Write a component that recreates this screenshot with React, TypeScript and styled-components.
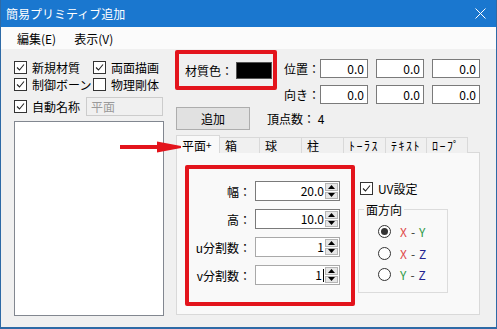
import React from 'react';
import styled, { createGlobalStyle } from 'styled-components';

const GlobalStyle = createGlobalStyle`
  html, body {
    margin: 0;
    padding: 0;
    background: #f0f0f0;
    overflow: hidden;
  }
  body {
    font-family: 'Noto Sans CJK JP', 'Noto Sans', sans-serif;
    font-size: 12px;
    color: #000000;
  }
`;

const Window = styled.div`
  position: relative;
  width: 497px;
  height: 329px;
  box-sizing: border-box;
  border: 1px solid #2e6aa6;
  border-top: none;
  border-bottom-width: 2px;
  background: #f0f0f0;
  display: flex;
  flex-direction: column;
  overflow: hidden;
`;

const TitleBar = styled.div`
  height: 27px;
  flex: none;
  background: #1a77cf;
  color: #ffffff;
  display: flex;
  align-items: center;
  justify-content: space-between;
  padding: 0 10px 0 5px;
  line-height: 27px;
`;

const MenuBar = styled.div`
  height: 22px;
  flex: none;
  background: #fbfbfb;
  display: flex;
  align-items: center;
  gap: 18px;
  padding-left: 16px;
`;

const Body = styled.div`
  display: flex;
  gap: 11px;
  padding-left: 13px;
`;

const LeftCol = styled.div`
  width: 150px;
  padding-top: 12px;
  display: flex;
  flex-direction: column;
`;

const CheckGrid = styled.div`
  display: grid;
  grid-template-columns: 79px auto;
  row-gap: 4px;
`;

const CheckItem = styled.label<{ $w?: number }>`
  display: flex;
  align-items: center;
  gap: 5px;
  height: 13px;
  line-height: 13px;
  white-space: nowrap;
  width: ${(p) => (p.$w ? `${p.$w}px` : 'auto')};
  flex: none;
`;

const Box = styled.span`
  width: 13px;
  height: 13px;
  box-sizing: border-box;
  border: 1px solid #333333;
  background: #ffffff;
  display: inline-flex;
  flex: none;
`;

const AutoRow = styled.div`
  display: flex;
  align-items: center;
  margin-top: 6px;
  height: 18px;
`;

const NameInput = styled.div`
  width: 77px;
  height: 19px;
  box-sizing: border-box;
  border: 1px solid #cccccc;
  background: #f0f0f0;
  color: #9a9a9a;
  padding-left: 4px;
  line-height: 17px;
`;

const ListBox = styled.div`
  margin-top: 6px;
  height: 195px;
  box-sizing: border-box;
  border: 1px solid #828790;
  background: #ffffff;
`;

const RightCol = styled.div`
  display: flex;
  flex-direction: column;
`;

const TopRow = styled.div`
  display: flex;
  align-items: flex-start;
`;

const ColorBox = styled.div`
  margin-top: 1px;
  width: 102px;
  height: 40px;
  box-sizing: border-box;
  border: 4px solid #e3141c;
  border-radius: 2px;
  display: flex;
  align-items: center;
  padding: 0 1px 0 6px;
`;

const Swatch = styled.span`
  margin-left: auto;
  width: 36px;
  height: 17px;
  box-sizing: border-box;
  border: 1px solid #555555;
  background: #000000;
`;

const PosGrid = styled.div`
  margin: 10px 0 0 4px;
  display: grid;
  grid-template-columns: 39px repeat(3, 56px);
  grid-auto-rows: 19px;
  row-gap: 7px;
  align-items: center;
`;

const FieldLabel = styled.span`
  text-align: right;
  white-space: nowrap;
`;

const NumBox = styled.div`
  width: 48px;
  height: 19px;
  box-sizing: border-box;
  border: 1px solid #7a7a7a;
  background: #ffffff;
  text-align: right;
  padding-right: 3px;
  line-height: 17px;
`;

const ButtonRow = styled.div`
  display: flex;
  align-items: center;
  margin-top: 3px;
`;

const AddButton = styled.button`
  margin-left: 1px;
  width: 74px;
  height: 23px;
  box-sizing: border-box;
  background: #e1e1e1;
  border: 1px solid #adadad;
  font: inherit;
  padding: 0;
  color: #000000;
`;

const VertexCount = styled.span`
  margin-left: 17px;
`;

const TabStrip = styled.div`
  position: relative;
  z-index: 1;
  margin: 5px 0 0 1px;
  height: 18px;
  display: flex;
  align-items: flex-end;
`;

const Tab = styled.div<{ $w: number; $active?: boolean; $narrow?: boolean }>`
  width: ${(p) => p.$w}px;
  height: ${(p) => (p.$active ? 18 : 16)}px;
  box-sizing: border-box;
  border: 1px solid #d9d9d9;
  border-bottom: none;
  margin-left: -1px;
  background: ${(p) => (p.$active ? '#f9f9f9' : '#f0f0f0')};
  padding-left: 5px;
  line-height: ${(p) => (p.$active ? 17 : 15)}px;
  white-space: nowrap;
  letter-spacing: ${(p) => (p.$narrow ? '1.5px' : '0')};
  &:first-child {
    margin-left: 0;
  }
`;

const Plus = styled.span`
  font-size: 10px;
  vertical-align: 2px;
`;

const Panel = styled.div`
  margin: -1px 0 0 1px;
  width: 304px;
  height: 163px;
  box-sizing: border-box;
  border: 1px solid #d9d9d9;
  background: #f9f9f9;
  display: flex;
  padding: 12px 0 0 8px;
`;

const SizeBox = styled.div`
  width: 170px;
  height: 141px;
  box-sizing: border-box;
  border: 4px solid #e3141c;
  border-radius: 2px;
  padding-top: 12px;
  display: grid;
  grid-template-columns: 62px 85px;
  grid-auto-rows: 20px;
  column-gap: 4px;
  row-gap: 8px;
  align-content: start;
  align-items: center;
`;

const SpinBox = styled.div<{ $soft?: boolean }>`
  height: 20px;
  box-sizing: border-box;
  border: 1px solid ${(p) => (p.$soft ? '#a9a9a9' : '#7a7a7a')};
  background: #ffffff;
  display: flex;
`;

const SpinValue = styled.span`
  flex: 1;
  text-align: right;
  padding-right: 1px;
  line-height: 18px;
`;

const Caret = styled.span`
  display: inline-block;
  width: 1px;
  height: 13px;
  background: #000000;
  vertical-align: -2px;
  margin-left: 1px;
`;

const SpinButtons = styled.div`
  width: 13px;
  display: flex;
  flex-direction: column;
  padding: 1px 1px 1px 0;
  gap: 1px;
`;

const SpinBtn = styled.span`
  flex: 1;
  background: #e6e6e6;
  border: 1px solid #b5b5b5;
  display: flex;
  align-items: center;
  justify-content: center;
`;

const SideCol = styled.div`
  margin-left: 3px;
  display: flex;
  flex-direction: column;
`;

const UVRow = styled.div`
  margin: 17px 0 0 2px;
`;

const GroupBox = styled.fieldset`
  margin: 7px 0 0 0;
  width: 90px;
  min-width: 0;
  box-sizing: border-box;
  border: 1px solid #dcdcdc;
  padding: 4px 0 6px 5px;
`;

const Legend = styled.legend`
  padding: 0 2px;
  line-height: 15px;
`;

const RadioList = styled.div`
  padding-left: 14px;
`;

const RadioRow = styled.div`
  height: 21.5px;
  display: flex;
  align-items: center;
  gap: 9px;
`;

const RadioDot = styled.span<{ $on?: boolean }>`
  width: 13px;
  height: 13px;
  box-sizing: border-box;
  border: 1px solid #333333;
  border-radius: 50%;
  background: #ffffff;
  display: flex;
  align-items: center;
  justify-content: center;
  &::after {
    content: '';
    width: 7px;
    height: 7px;
    border-radius: 50%;
    background: ${(p) => (p.$on ? '#333333' : 'transparent')};
  }
`;

const Axis = styled.span<{ $c: string }>`
  color: ${(p) => p.$c};
`;

const Dash = styled.span`
  color: #333333;
  margin: 0 4px;
`;

const ArrowMark = styled.svg`
  position: absolute;
  left: 119px;
  top: 141px;
  z-index: 2;
`;

const axisColor: Record<string, string> = {
  X: '#e0484a',
  Y: '#2f9a45',
  Z: '#23238f',
};

const Check: React.FC<{ on?: boolean }> = ({ on }) => (
  <Box>
    {on && (
      <svg width="11" height="11" viewBox="0 0 11 11">
        <polyline points="2,5.5 4.5,8 9,2.5" fill="none" stroke="#222" strokeWidth="1.1" />
      </svg>
    )}
  </Box>
);

const Arrow: React.FC<{ up?: boolean }> = ({ up }) => (
  <svg width="7" height="4" viewBox="0 0 7 4">
    <polygon points={up ? '0,4 3.5,0 7,4' : '0,0 3.5,4 7,0'} fill="#000" />
  </svg>
);

const Spin: React.FC<{ value: string; soft?: boolean; caret?: boolean }> = ({ value, soft, caret }) => (
  <SpinBox $soft={soft}>
    <SpinValue>
      {value}
      {caret && <Caret />}
    </SpinValue>
    <SpinButtons>
      <SpinBtn>
        <Arrow up />
      </SpinBtn>
      <SpinBtn>
        <Arrow />
      </SpinBtn>
    </SpinButtons>
  </SpinBox>
);

const Radio: React.FC<{ a: string; b: string; on?: boolean }> = ({ a, b, on }) => (
  <RadioRow>
    <RadioDot $on={on} />
    <span>
      <Axis $c={axisColor[a]}>{a}</Axis>
      <Dash>-</Dash>
      <Axis $c={axisColor[b]}>{b}</Axis>
    </span>
  </RadioRow>
);

const tabs = [
  { label: '箱', w: 41 },
  { label: '球', w: 43 },
  { label: '柱', w: 43 },
  { label: 'ﾄｰﾗｽ', w: 43, narrow: true },
  { label: 'ﾃｷｽﾄ', w: 42, narrow: true },
  { label: 'ﾛｰﾌﾟ', w: 42, narrow: true },
];

const App: React.FC = () => {
  return (
    <>
      <GlobalStyle />
      <Window>
        <TitleBar>
          <span>簡易プリミティブ追加</span>
          <svg width="11" height="11" viewBox="0 0 11 11">
            <path d="M0.5 0.5 L10.5 10.5 M10.5 0.5 L0.5 10.5" stroke="#fff" strokeWidth="1" />
          </svg>
        </TitleBar>
        <MenuBar>
          <span>編集(E)</span>
          <span>表示(V)</span>
        </MenuBar>
        <Body>
          <LeftCol>
            <CheckGrid>
              <CheckItem>
                <Check on />
                新規材質
              </CheckItem>
              <CheckItem>
                <Check on />
                両面描画
              </CheckItem>
              <CheckItem>
                <Check on />
                制御ボーン
              </CheckItem>
              <CheckItem>
                <Check />
                物理剛体
              </CheckItem>
            </CheckGrid>
            <AutoRow>
              <CheckItem $w={72}>
                <Check on />
                自動名称
              </CheckItem>
              <NameInput>平面</NameInput>
            </AutoRow>
            <ListBox />
          </LeftCol>
          <RightCol>
            <TopRow>
              <ColorBox>
                <span>材質色：</span>
                <Swatch />
              </ColorBox>
              <PosGrid>
                <FieldLabel>位置：</FieldLabel>
                <NumBox>0.0</NumBox>
                <NumBox>0.0</NumBox>
                <NumBox>0.0</NumBox>
                <FieldLabel>向き：</FieldLabel>
                <NumBox>0.0</NumBox>
                <NumBox>0.0</NumBox>
                <NumBox>0.0</NumBox>
              </PosGrid>
            </TopRow>
            <ButtonRow>
              <AddButton>追加</AddButton>
              <VertexCount>頂点数： 4</VertexCount>
            </ButtonRow>
            <TabStrip>
              <Tab $w={44} $active>
                平面<Plus>+</Plus>
              </Tab>
              {tabs.map((t) => (
                <Tab key={t.label} $w={t.w} $narrow={t.narrow}>
                  {t.label}
                </Tab>
              ))}
            </TabStrip>
            <Panel>
              <SizeBox>
                <FieldLabel>幅：</FieldLabel>
                <Spin value="20.0" />
                <FieldLabel>高：</FieldLabel>
                <Spin value="10.0" />
                <FieldLabel>u分割数：</FieldLabel>
                <Spin value="1" soft />
                <FieldLabel>v分割数：</FieldLabel>
                <Spin value="1" soft caret />
              </SizeBox>
              <SideCol>
                <UVRow>
                  <CheckItem>
                    <Check on />
                    UV設定
                  </CheckItem>
                </UVRow>
                <GroupBox>
                  <Legend>面方向</Legend>
                  <RadioList>
                    <Radio a="X" b="Y" on />
                    <Radio a="X" b="Z" />
                    <Radio a="Y" b="Z" />
                  </RadioList>
                </GroupBox>
              </SideCol>
            </Panel>
          </RightCol>
        </Body>
        <ArrowMark width="62" height="12" viewBox="0 0 62 12">
          <rect x="0" y="4" width="40" height="4" fill="#e3141c" />
          <polygon points="37,0.5 61,5 61,7 37,11.5" fill="#e3141c" />
        </ArrowMark>
      </Window>
    </>
  );
};

export default App;
